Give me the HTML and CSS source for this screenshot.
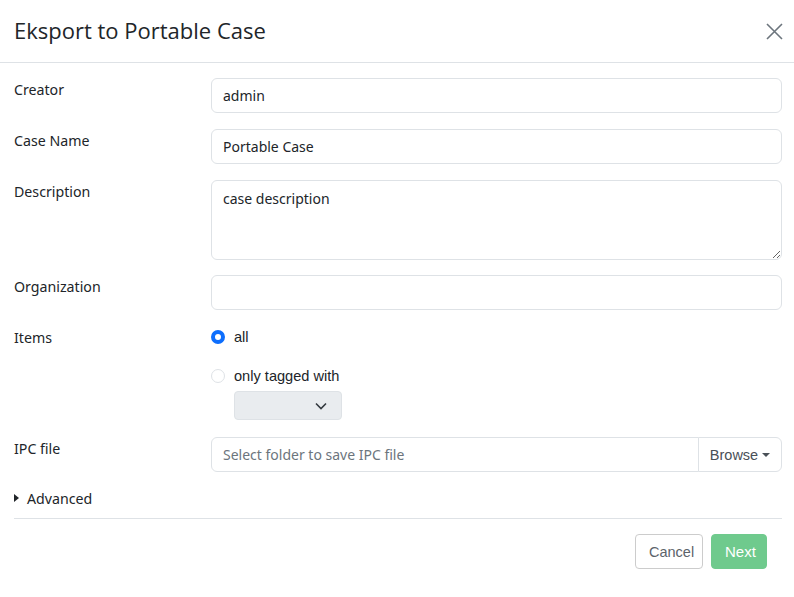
FILE: index.html
```html
<!DOCTYPE html>
<html>
<head>
<meta charset="utf-8">
<link rel="stylesheet" href="styles.css">
</head>
<body>
<div class="modal">
  <div class="modal-header">
    <h1 class="title">Eksport to Portable Case</h1>
    <button class="close" aria-label="Close">
      <svg width="17" height="17" viewBox="0 0 17 17"><path d="M1 1L16 16M16 1L1 16" stroke="#6c757d" stroke-width="1.6" fill="none"/></svg>
    </button>
  </div>
  <div class="modal-body">
    <div class="row">
      <label class="label">Creator</label>
      <div class="field"><input class="input" type="text" value="admin"></div>
    </div>
    <div class="row">
      <label class="label">Case Name</label>
      <div class="field"><input class="input" type="text" value="Portable Case"></div>
    </div>
    <div class="row">
      <label class="label">Description</label>
      <div class="field"><textarea class="input textarea">case description</textarea></div>
    </div>
    <div class="row">
      <label class="label">Organization</label>
      <div class="field"><input class="input" type="text" value=""></div>
    </div>
    <div class="row row-items">
      <label class="label">Items</label>
      <div class="field radios">
        <div class="radio-line"><span class="radio checked"></span><span class="rtext">all</span></div>
        <div class="radio-line second"><span class="radio"></span><span class="rtext">only tagged with</span></div>
        <div class="select">
          <svg width="12" height="8" viewBox="0 0 12 8"><path d="M1 1.5L6 6.5L11 1.5" stroke="#343a40" stroke-width="1.6" fill="none"/></svg>
        </div>
      </div>
    </div>
    <div class="row">
      <label class="label">IPC file</label>
      <div class="field group">
        <input class="input grp-input" type="text" placeholder="Select folder to save IPC file">
        <button class="browse">Browse <span class="caret"></span></button>
      </div>
    </div>
    <div class="advanced"><span class="tri"></span>Advanced</div>
  </div>
  <div class="modal-footer">
    <button class="btn cancel">Cancel</button>
    <button class="btn next">Next</button>
  </div>
</div>
</body>
</html>
```
FILE: styles.css
```css
html, body {
  margin: 0;
  padding: 0;
  background: #fff;
}
body {
  font-family: "Noto Sans", "Open Sans", sans-serif;
  color: #212529;
  font-size: 14px;
}
.modal {
  width: 794px;
  height: 597px;
  box-sizing: border-box;
}
.modal-header {
  height: 62px;
  border-bottom: 1px solid #dee2e6;
  display: flex;
  align-items: center;
  justify-content: space-between;
  padding: 0 11px 0 14px;
  box-sizing: content-box;
}
.title {
  margin: 0 0 2px 0;
  font-family: "Open Sans", sans-serif;
  font-weight: 400;
  font-size: 22px;
  color: #212529;
}
.close {
  border: 0;
  background: none;
  padding: 0;
  width: 17px;
  height: 17px;
  display: flex;
}
.modal-body {
  padding: 15px 12px 0 14px;
}
.row {
  display: flex;
  margin-bottom: 15px;
}
.label {
  width: 197px;
  flex: none;
  padding-top: 2px;
  line-height: 20px;
  font-size: 14.2px;
}
.field {
  flex: 1;
}
.input {
  display: block;
  width: 100%;
  box-sizing: border-box;
  height: 35px;
  border: 1px solid #dee2e6;
  border-radius: 6px;
  padding: 0 11px;
  font-family: "Noto Sans", sans-serif;
  font-size: 14px;
  color: #212529;
  outline: none;
  background: #fff;
}
.row:nth-child(2) { margin-bottom: 16px; }
.row:first-child { margin-bottom: 16px; }
.textarea {
  height: 80px;
  padding-top: 8px;
  resize: vertical;
}
.row-items {
  margin-bottom: 17px;
}
.row-items .label {
  padding-top: 3px;
}
.radios {
  padding-top: 2px;
}
.radio-line {
  display: flex;
  align-items: center;
  height: 20px;
  font-family: "Liberation Sans", Arial, sans-serif;
  font-size: 14.6px;
}
.radio-line.second {
  margin-top: 19px;
}
.radio {
  width: 14px;
  height: 14px;
  box-sizing: border-box;
  border-radius: 50%;
  border: 1px solid #dee2e6;
  margin-right: 9px;
  background: #fff;
}
.radio.checked {
  border: 4px solid #0d6efd;
}
.select {
  margin: 5px 0 0 23px;
  width: 108px;
  height: 29px;
  box-sizing: border-box;
  background: #e9ecef;
  border: 1px solid #dee2e6;
  border-radius: 4px;
  display: flex;
  align-items: center;
  justify-content: flex-end;
  padding-right: 14px;
}
.group {
  display: flex;
}
.grp-input {
  flex: 1;
  border-radius: 6px 0 0 6px;
}
.grp-input::placeholder {
  color: #6c757d;
  opacity: 1;
}
.browse {
  width: 84px;
  height: 35px;
  box-sizing: border-box;
  border: 1px solid #dee2e6;
  margin-left: -1px;
  border-radius: 0 6px 6px 0;
  background: #fff;
  font-family: "Liberation Sans", Arial, sans-serif;
  font-size: 14.5px;
  color: #495057;
  display: flex;
  align-items: center;
  justify-content: center;
  gap: 4px;
  padding: 0;
}
.caret {
  width: 0;
  height: 0;
  border-left: 4px solid transparent;
  border-right: 4px solid transparent;
  border-top: 4px solid #495057;
}
.advanced {
  display: flex;
  align-items: center;
  height: 20px;
  margin-top: 16px;
  padding-bottom: 10px;
  border-bottom: 1px solid #dee2e6;
  font-size: 14.2px;
}
.tri {
  width: 0;
  height: 0;
  border-top: 4px solid transparent;
  border-bottom: 4px solid transparent;
  border-left: 5px solid #212529;
  margin-right: 8px;
}
.modal-footer {
  display: flex;
  justify-content: flex-end;
  gap: 8px;
  padding: 15px 27px 0 0;
}
.btn {
  height: 35px;
  box-sizing: border-box;
  border-radius: 4px;
  font-family: "Liberation Sans", Arial, sans-serif;
  font-size: 14.5px;
  padding: 0 13px;
}
.cancel {
  background: #fff;
  border: 1px solid #ccc;
  color: #5c636a;
  width: 68px;
}
.next {
  background: #6fca8d;
  border: 1px solid #6fca8d;
  color: #fff;
  width: 56px;
  font-size: 15px;
}
```
